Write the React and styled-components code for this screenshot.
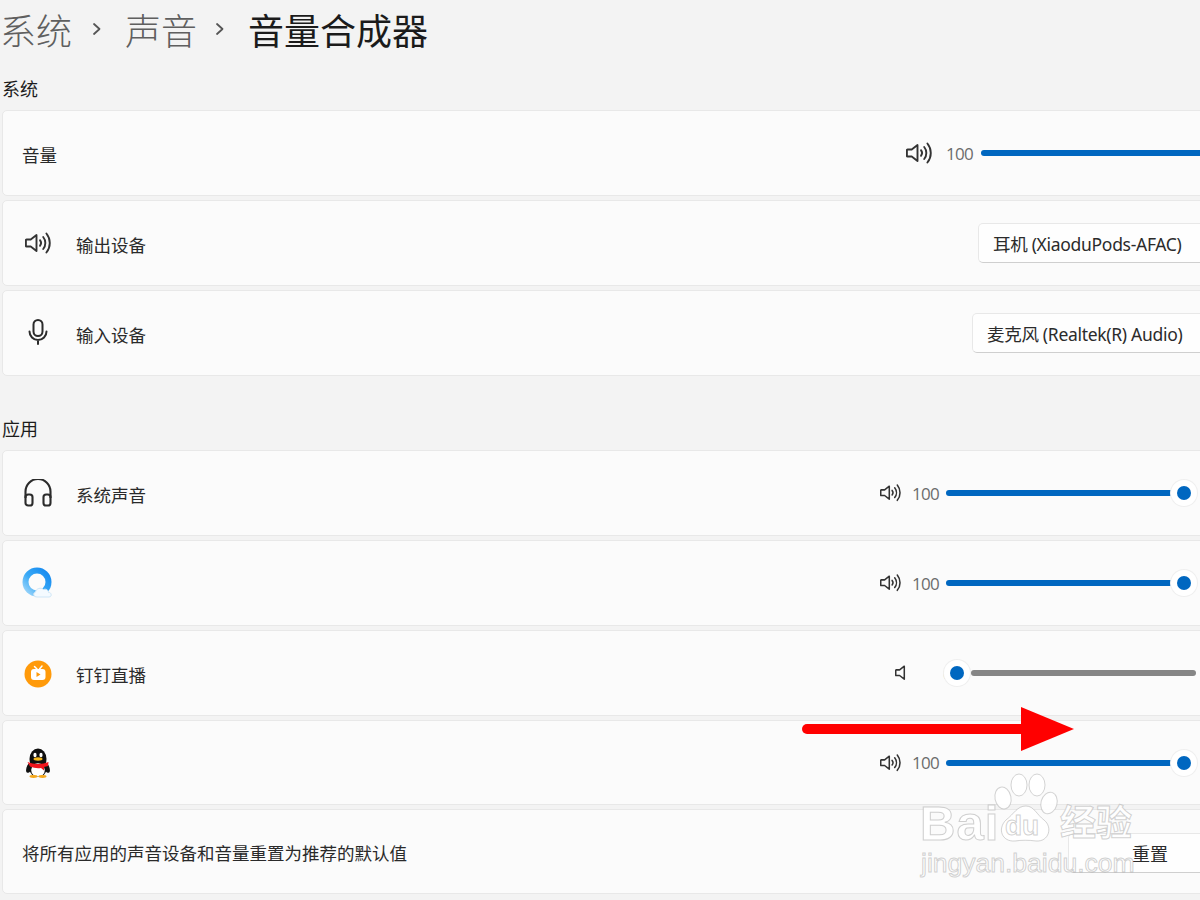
import React from "react";
import styled, { createGlobalStyle } from "styled-components";

const Global = createGlobalStyle`
  html, body { margin: 0; padding: 0; background: #f3f3f3; }
  body { font-family: "Noto Sans", "Noto Sans CJK SC", sans-serif; }
`;

const Page = styled.div`
  position: relative;
  width: 1200px;
  height: 900px;
  overflow: hidden;
  background: #f3f3f3;
  padding-left: 2px;
  box-sizing: border-box;
`;
const Breadcrumb = styled.header`
  display: flex;
  align-items: center;
  height: 64px;
  box-sizing: border-box;
  padding-bottom: 6px;
  margin-left: -2px;
  font-size: 36px;
  font-weight: 300;
  color: #666;
`;
const Crumb = styled.span`
  width: ${(p) => p.$w}px;
  flex: none;
  white-space: nowrap;
  color: ${(p) => (p.$current ? "#1b1b1b" : "#5f5f5f")};
  font-weight: ${(p) => (p.$current ? 400 : 300)};
`;
const Chevron = styled.svg`
  flex: none;
  width: 53px;
  height: 16px;
`;
const SectionLabel = styled.h2`
  margin: 0;
  padding: ${(p) => p.$top}px 0 8px;
  height: 26px;
  line-height: 26px;
  font-size: 18px;
  font-weight: 400;
  color: #1c1c1c;
  box-sizing: content-box;
`;
const Group = styled.section`
  display: flex;
  flex-direction: column;
  gap: 4px;
  width: 1240px;
`;
const Card = styled.div`
  display: flex;
  align-items: center;
  height: ${(p) => p.$h || 86}px;
  box-sizing: border-box;
  padding-left: 19px;
  padding-right: ${(p) => p.$inset || 0}px;
  background: #fbfbfb;
  border: 1px solid #e8e8e8;
  border-radius: 5px;
`;
const Leading = styled.div`
  flex: none;
  width: 32px;
  margin-right: 22px;
  display: flex;
  justify-content: center;
  position: relative;
  top: ${(p) => p.$shift || 0}px;
`;
const Label = styled.span`
  flex: 1;
  padding-top: 2px;
  font-size: 17.5px;
  color: #2a2a2a;
  white-space: nowrap;
`;
const Volume = styled.div`
  display: flex;
  align-items: center;
  flex: none;
`;
const Value = styled.span`
  width: 27px;
  margin-left: ${(p) => p.$gap}px;
  margin-right: ${(p) => p.$after}px;
  font-family: "Open Sans", sans-serif;
  font-size: 17px;
  letter-spacing: -0.7px;
  text-align: right;
  color: #6c6c6c;
`;
const Track = styled.div`
  position: relative;
  width: ${(p) => p.$w}px;
  height: 6px;
  border-radius: 3px;
  background: ${(p) => (p.$off ? "#868686" : "#0067c0")};
`;
const Thumb = styled.span`
  position: absolute;
  top: 50%;
  left: ${(p) => p.$x}px;
  width: 26px;
  height: 26px;
  margin: -13px 0 0 -13px;
  border-radius: 50%;
  background: #fff;
  box-shadow: 0 0 0 1px #efefef;
  display: flex;
  align-items: center;
  justify-content: center;
  &::after {
    content: "";
    width: 14px;
    height: 14px;
    border-radius: 50%;
    background: #0067c0;
  }
`;
const Select = styled.div`
  flex: none;
  width: ${(p) => p.$w}px;
  height: 40px;
  box-sizing: border-box;
  padding-left: 14px;
  display: flex;
  align-items: center;
  background: #fefefe;
  border: 1px solid #e8e8e8;
  border-bottom-color: #cfcfcf;
  border-radius: 5px;
  font-size: 17.5px;
  letter-spacing: -0.3px;
  color: #2b2b2b;
  white-space: nowrap;
`;
const ResetButton = styled.button`
  flex: none;
  width: 164px;
  height: 40px;
  margin-top: 2px;
  background: #fefefe;
  border: 1px solid #e8e8e8;
  border-bottom-color: #cfcfcf;
  border-radius: 5px;
  font: inherit;
  font-size: 18px;
  color: #2b2b2b;
`;
const Overlay = styled.svg`
  position: absolute;
  left: 0;
  top: 0;
  width: 1200px;
  height: 900px;
  pointer-events: none;
`;
const MarkText = styled.span`
  position: absolute;
  left: ${(p) => p.$x}px;
  top: ${(p) => p.$y}px;
  font-family: ${(p) => (p.$cjk ? '"Noto Sans CJK SC"' : '"Liberation Sans"')}, sans-serif;
  font-size: ${(p) => p.$size}px;
  font-weight: ${(p) => p.$weight || 400};
  line-height: 1;
  letter-spacing: ${(p) => p.$spacing || 0}px;
  color: rgba(255, 255, 255, 0.9);
  -webkit-text-stroke: 1px rgba(170, 170, 170, 0.55);
  white-space: nowrap;
`;

const Speaker = ({ size = 26, level = 3 }) => (
  <svg width={size} height={(size * 24) / 26} viewBox="0 0 26 24" fill="none" stroke="#333" strokeWidth="1.9" strokeLinecap="round" strokeLinejoin="round">
    <path d="M1.5 8.5h4.2L11.5 4v16l-5.8-4.5H1.5a.6.6 0 0 1-.6-.6V9.1a.6.6 0 0 1 .6-.6z" />
    {level > 0 && <path d="M15 9.2a4.500 4.500 0 0 1 0 5.600" />}
    {level > 0 && <path d="M18.200 6a9.500 9.500 0 0 1 0 12" />}
    {level > 0 && <path d="M21.400 2.500a15 15 0 0 1 0 19" />}
  </svg>
);
const Headphones = () => (
  <svg width="28" height="28" viewBox="0 0 28 28" fill="none" stroke="#2b2b2b" strokeWidth="2.100" strokeLinejoin="round">
    <path d="M1.500 19v-6.500a12.500 12.500 0 0 1 25 0V19" />
    <rect x="1.500" y="15.500" width="7" height="11" rx="2.600" />
    <rect x="19.500" y="15.500" width="7" height="11" rx="2.600" />
  </svg>
);
const Mic = () => (
  <svg width="20" height="26" viewBox="0 0 20 26" fill="none" stroke="#2b2b2b" strokeWidth="2" strokeLinecap="round">
    <rect x="5.500" y="1" width="9" height="16" rx="4.500" />
    <path d="M1.500 12.500a8.500 8.500 0 0 0 17 0M10 21v4" />
  </svg>
);
const BrowserLogo = () => (
  <svg width="32" height="32" viewBox="0 0 32 32">
    <defs>
      <linearGradient id="ring" x1="1" y1="0" x2="0" y2="1">
        <stop offset="0" stopColor="#0a80ee" />
        <stop offset="0.55" stopColor="#3aaaf6" />
        <stop offset="1" stopColor="#bfe4fb" />
      </linearGradient>
    </defs>
    <circle cx="15" cy="15" r="14.500" fill="url(#ring)" />
    <circle cx="15" cy="15" r="8.500" fill="#fbfbfb" />
    <path d="M15 30c-3.500 0-4.500-4-1.500-5 .5-3.500 5.500-5 8-2.500 2.500-1 5 .5 5 3 3-.5 4 4.500.5 4.500z" fill="#f4faff" stroke="#cfe6f7" strokeWidth="1" />
  </svg>
);
const LiveLogo = () => (
  <svg width="28" height="28" viewBox="0 0 28 28">
    <circle cx="14" cy="14" r="13.500" fill="#ff9a0a" />
    <path d="M10.500 6.500l2.500 2.500M18 6l-2.500 3" stroke="#fff" strokeWidth="1.500" strokeLinecap="round" />
    <rect x="7" y="9" width="14.500" height="11" rx="3" fill="#fff" />
    <path d="M12.500 12v5l4-2.500z" fill="#ff9a0a" />
  </svg>
);
const PenguinLogo = () => (
  <svg width="26" height="30" viewBox="0 0 26 30">
    <ellipse cx="4" cy="20" rx="2.500" ry="5" fill="#111" transform="rotate(18 4 20)" />
    <ellipse cx="22" cy="20" rx="2.500" ry="5" fill="#111" transform="rotate(-18 22 20)" />
    <ellipse cx="13" cy="11" rx="8.500" ry="10.500" fill="#0f0f0f" />
    <ellipse cx="13" cy="21" rx="8.500" ry="8" fill="#0f0f0f" />
    <ellipse cx="13" cy="22" rx="6.800" ry="6.800" fill="#fff" />
    <ellipse cx="10" cy="7" rx="1.600" ry="2.300" fill="#fff" />
    <ellipse cx="16" cy="7" rx="1.600" ry="2.300" fill="#fff" />
    <ellipse cx="13" cy="11" rx="4.500" ry="1.700" fill="#f5b81c" />
    <path d="M2.500 14c6 2.500 15 2.500 21 0l-.5 4-4 1v3.500l-3-2.500c-4 .5-7 0-11-1.500z" fill="#f0141c" />
    <ellipse cx="8.500" cy="28.500" rx="4" ry="1.400" fill="#f5a81c" />
    <ellipse cx="17.500" cy="28.500" rx="4" ry="1.400" fill="#f5a81c" />
  </svg>
);

const AppVolume = ({ off }) => (
  <Volume>
    <Speaker size={21} level={off ? 0 : 3} />
    <Value $gap={off ? 9 : 11} $after={off ? 19 : 7}>{off ? "0" : "100"}</Value>
    {off ? (
      <Track $w={225} $off>
        <Thumb $x={-14} />
      </Track>
    ) : (
      <Track $w={238}>
        <Thumb $x={238} />
      </Track>
    )}
  </Volume>
);

const crumbArrow = (
  <Chevron viewBox="0 0 53 16" fill="none" stroke="#555" strokeWidth="1.800" strokeLinecap="round" strokeLinejoin="round">
    <path d="M22 3l5.500 5-5.500 5" />
  </Chevron>
);

export default function App() {
  return (
    <Page>
      <Global />
      <Breadcrumb>
        <Crumb $w={72}>系统</Crumb>
        {crumbArrow}
        <Crumb $w={70}>声音</Crumb>
        {crumbArrow}
        <Crumb $current $w={400}>音量合成器</Crumb>
      </Breadcrumb>

      <SectionLabel $top={12}>系统</SectionLabel>
      <Group>
        <Card $inset={20}>
          <Label>音量</Label>
          <Volume>
            <Speaker size={26} />
            <Value $gap={14} $after={8}>100</Value>
            <Track $w={240} />
          </Volume>
        </Card>
        <Card $inset={5}>
          <Leading><Speaker size={26} /></Leading>
          <Label>输出设备</Label>
          <Select $w={258}>耳机 (XiaoduPods-AFAC)</Select>
        </Card>
        <Card $inset={5}>
          <Leading $shift={-1}><Mic /></Leading>
          <Label>输入设备</Label>
          <Select $w={264}>麦克风 (Realtek(R) Audio)</Select>
        </Card>
      </Group>

      <SectionLabel $top={40}>应用</SectionLabel>
      <Group>
        <Card $inset={57}>
          <Leading><Headphones /></Leading>
          <Label>系统声音</Label>
          <AppVolume />
        </Card>
        <Card $inset={57}>
          <Leading><BrowserLogo /></Leading>
          <Label />
          <AppVolume />
        </Card>
        <Card $inset={45}>
          <Leading $shift={1}><LiveLogo /></Leading>
          <Label>钉钉直播</Label>
          <AppVolume off />
        </Card>
        <Card $inset={57} $h={85}>
          <Leading><PenguinLogo /></Leading>
          <Label />
          <AppVolume />
        </Card>
        <Card $inset={9} $h={85}>
          <Label>将所有应用的声音设备和音量重置为推荐的默认值</Label>
          <ResetButton>重置</ResetButton>
        </Card>
      </Group>

      <Overlay viewBox="0 0 1200 900">
        <path d="M807 729H1022" stroke="#f00" strokeWidth="10" strokeLinecap="round" />
        <path d="M1021 707L1074 729L1021 751Z" fill="#f00" />
        <g fill="rgba(255,255,255,.9)" stroke="rgba(170,170,170,.5)" strokeWidth="1">
          <ellipse cx="1003" cy="798" rx="8" ry="11" transform="rotate(-12 1003 798)" />
          <ellipse cx="1019" cy="785" rx="8" ry="11" />
          <ellipse cx="1037" cy="785" rx="8" ry="11" />
          <ellipse cx="1049" cy="803" rx="8" ry="11" transform="rotate(15 1049 803)" />
          <path d="M1026 806c8 0 11 9 18 14 9 7 5 22-8 21-7-1-15-1-21 0-13 1-18-12-9-21 8-6 11-14 20-14z" />
        </g>
      </Overlay>
      <MarkText $x={920} $y={799} $size={49} $weight={700} $spacing={1}>Bai</MarkText>
      <MarkText $x={1005} $y={812} $size={28} $weight={700}>du</MarkText>
      <MarkText $cjk $x={1060} $y={802} $size={36} $weight={700}>经验</MarkText>
      <MarkText $x={921} $y={850} $size={26.5}>jingyan.baidu.com</MarkText>
    </Page>
  );
}
